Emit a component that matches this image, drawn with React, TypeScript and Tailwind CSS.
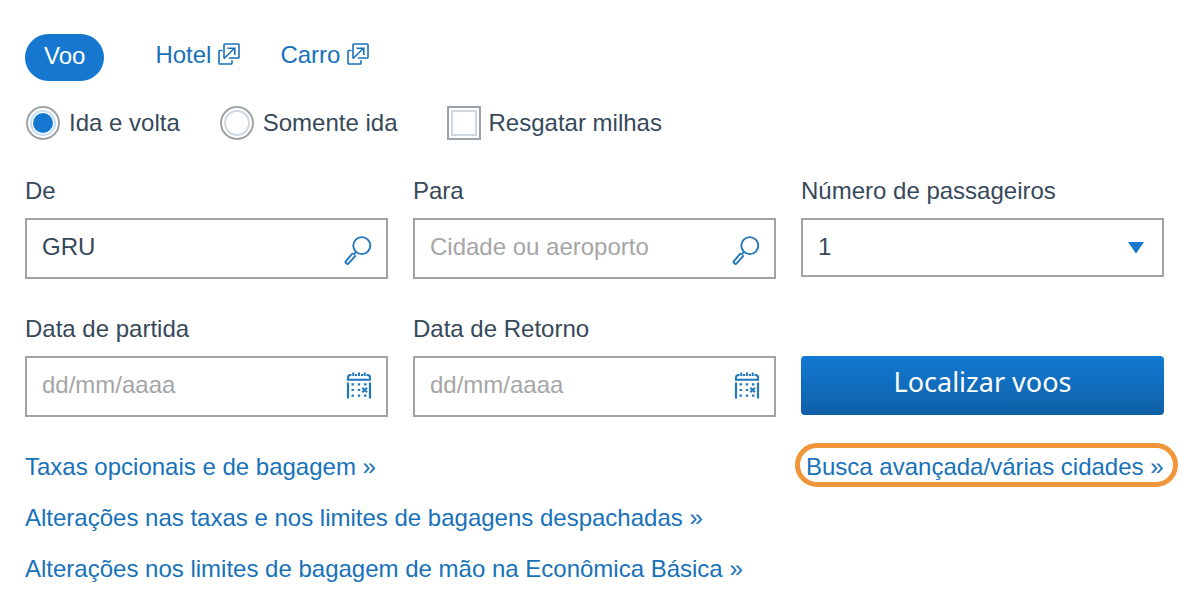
import { ReactNode, useState } from "react";

const ExternalIcon = () => (
  <svg width="22" height="24" viewBox="0 0 22 24" fill="none" stroke="currentColor" strokeWidth="1.6" aria-hidden="true">
    <path d="M6 15V1.8Q6 1 6.8 1H20.2Q21 1 21 1.8V14.2Q21 15 20.2 15H11" />
    <path d="M4.5 7.5H1.8Q1 7.5 1 8.3V20.2Q1 21 1.8 21H13.2Q14 21 14 20.2V17.2" />
    <path d="M5.8 15.8L16.5 5.2M9.5 5.2H16.8V12" />
  </svg>
);

const SearchIcon = () => (
  <svg width="28" height="34" viewBox="0 -4 28 34" fill="none" stroke="#2176bd" strokeWidth="1.9" className="shrink-0" aria-hidden="true">
    <circle cx="17.8" cy="9.6" r="8.5" />
    <path d="M8.8 17L1.8 25.4Q1.2 26.2 1.9 26.8L3 27.8Q3.7 28.4 4.4 27.7L11.8 19.4" />
    <path d="M11.8 16L9.4 18.8" />
  </svg>
);

const CalendarIcon = () => (
  <svg width="26" height="30" viewBox="0 0 26 30" fill="none" stroke="#2176bd" strokeWidth="2" className="shrink-0" aria-hidden="true">
    <path d="M2 8.3V5.5Q2 3 4.5 3H5.5M9 3H11M15 3H17M20.5 3H21.5Q24 3 24 5.5V8.3M1 7.8H25" />
    <path d="M7.3 0.5V4M13 0.5V4M18.7 0.5V4" />
    <path d="M2 10.5V26.5M24 10.5V26.5" strokeWidth="2.2" />
    <path d="M5.5 12.3H7.9M11.8 12.3H14.2M18 12.3H20.4M5.5 18H7.9M11.8 18H14.2M5.5 23.7H7.9M11.8 23.7H14.2M18 23.7H20.4" strokeWidth="2.2" />
    <path d="M16.3 15.8L21 20.3M21 15.8L16.3 20.3" />
  </svg>
);

type FieldProps = {
  id: string;
  label: string;
  placeholder?: string;
  defaultValue?: string;
  icon: ReactNode;
};

const Field = ({ id, label, placeholder, defaultValue, icon }: FieldProps) => (
  <div className="flex flex-col gap-[11px]">
    <label htmlFor={id} className="leading-8">
      {label}
    </label>
    <div className="flex h-[61px] items-center border-2 border-[#a0a3a5] pl-[15px] pr-[14px]">
      <input
        id={id}
        type="text"
        placeholder={placeholder}
        defaultValue={defaultValue}
        className="min-w-0 flex-1 bg-transparent pb-1 outline-none placeholder:text-[#a6a6a6]"
      />
      {icon}
    </div>
  </div>
);

const TRIP_TYPES = [
  { id: "round", label: "Ida e volta" },
  { id: "oneway", label: "Somente ida" },
];

const FEE_LINKS = [
  "Taxas opcionais e de bagagem »",
  "Alterações nas taxas e nos limites de bagagens despachadas »",
  "Alterações nos limites de bagagem de mão na Econômica Básica »",
];

export default function App() {
  const [trip, setTrip] = useState("round");

  return (
    <main className="min-h-screen bg-white pt-[34px] pr-10 pb-4 pl-[25px] font-['Liberation_Sans',Arial,sans-serif] text-[24px] text-[#36495a]">
      <nav className="flex items-start text-[#1872b9]">
        <button type="button" className="h-[47px] rounded-full bg-[#1577d0] px-[19px] pb-[3px] text-white">
          Voo
        </button>
        <a href="#hotel" className="ml-[51px] flex h-[41px] items-center gap-[7px]">
          Hotel <ExternalIcon />
        </a>
        <a href="#carro" className="ml-10 flex h-[41px] items-center gap-[7px]">
          Carro <ExternalIcon />
        </a>
      </nav>

      <form onSubmit={(e) => e.preventDefault()}>
        <div className="mt-[25px] flex items-center pl-px">
          {TRIP_TYPES.map((type) => (
            <label key={type.id} className="mr-10 flex h-[34px] items-center gap-[9px]">
              <input
                type="radio"
                name="trip"
                value={type.id}
                checked={trip === type.id}
                onChange={() => setTrip(type.id)}
                className="grid size-[34px] appearance-none place-content-center rounded-full border-2 border-[#a0a3a5] before:size-[26px] before:rounded-full before:border-2 before:border-[#cfd9e2] before:bg-clip-content before:p-px checked:before:border-[#c5def2] checked:before:bg-[#1577d0]"
              />
              {type.label}
            </label>
          ))}
          <label className="ml-[9px] flex h-[34px] items-center gap-2">
            <input
              type="checkbox"
              className="grid size-[34px] appearance-none place-content-center border-2 border-[#9aa3aa] before:size-[26px] before:border-2 before:border-[#cfd9e2] before:bg-clip-content before:p-[3px] checked:before:bg-[#1577d0]"
            />
            Resgatar milhas
          </label>
        </div>

        <div className="mt-[35px] grid grid-cols-3 gap-x-[25px] gap-y-[34px]">
          <Field id="from" label="De" defaultValue="GRU" icon={<SearchIcon />} />
          <Field id="to" label="Para" placeholder="Cidade ou aeroporto" icon={<SearchIcon />} />
          <div className="flex flex-col gap-[11px]">
            <label htmlFor="passengers" className="leading-8">
              Número de passageiros
            </label>
            <div className="grid items-center">
              <select
                id="passengers"
                className="col-start-1 row-start-1 h-[59px] appearance-none border-2 border-[#a0a3a5] bg-white pb-[2px] pl-[15px] outline-none"
              >
                {[1, 2, 3, 4, 5, 6].map((n) => (
                  <option key={n}>{n}</option>
                ))}
              </select>
              <svg
                width="16"
                height="12"
                viewBox="0 0 16 12"
                className="pointer-events-none col-start-1 row-start-1 mr-5 justify-self-end"
                aria-hidden="true"
              >
                <path d="M0 0H16L8 11.5Z" fill="#1577d0" />
              </svg>
            </div>
          </div>

          <Field id="depart" label="Data de partida" placeholder="dd/mm/aaaa" icon={<CalendarIcon />} />
          <Field id="return" label="Data de Retorno" placeholder="dd/mm/aaaa" icon={<CalendarIcon />} />
          <button
            type="submit"
            className="mt-[43px] h-[59px] rounded bg-linear-to-b from-[#127ad3] to-[#0f60a6] pb-[7px] font-['Noto_Sans',sans-serif] text-[27px] text-white"
          >
            Localizar voos
          </button>
        </div>
      </form>

      <div className="mt-[26px] grid grid-cols-3 gap-x-[25px] text-[#1872b9]">
        <ul className="col-span-2 flex flex-col gap-[19px] pt-2 leading-8">
          {FEE_LINKS.map((text) => (
            <li key={text}>
              <a href="#taxas">{text}</a>
            </li>
          ))}
        </ul>
        <a
          href="#avancada"
          className="-mr-[14px] -ml-[6px] flex h-11 items-center self-start rounded-full border-[5px] border-[#f0953a] pt-1 pl-[6px] whitespace-nowrap"
        >
          Busca avançada/várias cidades »
        </a>
      </div>
    </main>
  );
}
